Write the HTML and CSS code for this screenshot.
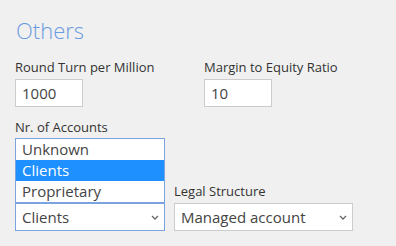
FILE: index.html
```html
<!DOCTYPE html>
<html lang="en">

<head>
    <meta charset="UTF-8" />
    <meta name="viewport" content="width=device-width, initial-scale=1.0" />
    <title>Others</title>
    <link rel="stylesheet" href="styles.css">
</head>

<body>
    <div class="section">
        <h2>Others</h2>
        <div class="row">
            <div class="field field-small">
                <label>Round Turn per Million</label>
                <div class="input">1000</div>
            </div>
            <div class="field field-small">
                <label>Margin to Equity Ratio</label>
                <div class="input">10</div>
            </div>
        </div>
        <div class="row row-bottom">
            <div class="field field-accounts">
                <label>Nr. of Accounts</label>
                <ul class="options">
                    <li>Unknown</li>
                    <li class="selected">Clients</li>
                    <li>Proprietary</li>
                </ul>
                <div class="select focused">Clients
                    <svg class="caret" width="8" height="5" viewBox="0 0 8 5"><path d="M1 1 L4 4 L7 1" fill="none" stroke="#666" stroke-width="1.3"/></svg>
                </div>
            </div>
            <div class="field field-legal">
                <label>Legal Structure</label>
                <div class="select">Managed account
                    <svg class="caret" width="8" height="5" viewBox="0 0 8 5"><path d="M1 1 L4 4 L7 1" fill="none" stroke="#666" stroke-width="1.3"/></svg>
                </div>
            </div>
        </div>
    </div>
</body>

</html>
```

FILE: styles.css
```css
* {
    box-sizing: border-box;
}

body {
    margin: 0;
    font-family: "Open Sans", "Noto Sans", sans-serif;
    background: #f0f0f0;
    color: #333;
}

.section {
    padding: 16px 15px;
}

h2 {
    margin: 0 0 14px 1px;
    font-size: 22px;
    font-weight: 300;
    color: #6a9ae0;
    line-height: 28px;
}

.row {
    display: flex;
}

.row-bottom {
    margin-top: 11px;
    align-items: flex-end;
}

.field {
    flex-shrink: 0;
}

.field label {
    display: block;
    font-size: 13px;
    line-height: 18px;
    margin-bottom: 3px;
}

.field-small {
    width: 189px;
}

.input {
    width: 68px;
    height: 28px;
    background: #fff;
    border: 1px solid #ccc;
    padding: 0 6px;
    font-size: 15px;
    line-height: 26px;
    color: #444;
}

.field-accounts {
    width: 159px;
}

.field-accounts label {
    margin-bottom: 2px;
}

.options {
    list-style: none;
    margin: 0;
    padding: 0;
    width: 150px;
    background: #fff;
    border: 1px solid #7aa3e0;
    font-size: 15px;
    line-height: 21px;
    color: #444;
}

.options li {
    padding: 0 6px;
}

.options li.selected {
    background: #1e90ff;
    color: #fff;
}

.select {
    position: relative;
    height: 28px;
    background: #fff;
    border: 1px solid #ccc;
    padding: 0 6px;
    font-size: 15px;
    line-height: 26px;
    color: #444;
}

.field-accounts .select {
    width: 150px;
}

.field-legal .select {
    width: 179px;
}

.select.focused {
    border-color: #7aa3e0;
}

.caret {
    position: absolute;
    right: 5px;
    top: 11px;
}
```
